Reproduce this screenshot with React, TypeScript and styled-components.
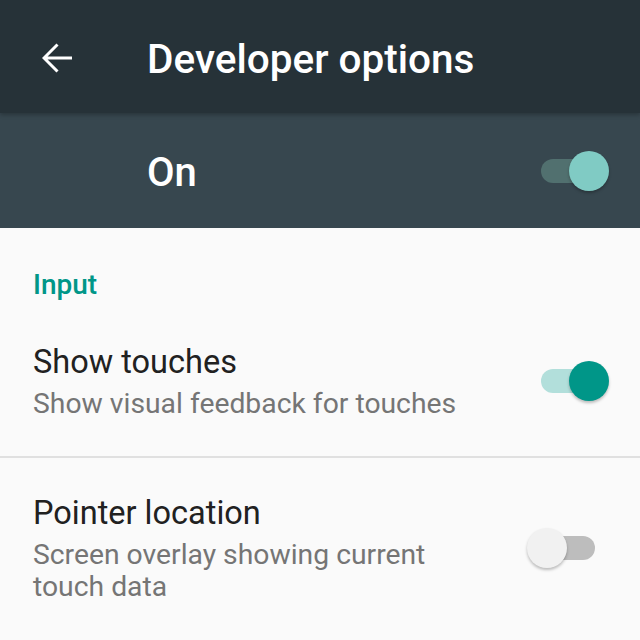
import React from 'react';
import styled, { createGlobalStyle } from 'styled-components';

const GlobalStyle = createGlobalStyle`
  html, body {
    margin: 0;
    padding: 0;
    background: #fafafa;
    font-family: Roboto, 'Noto Sans', sans-serif;
  }
`;

const Screen = styled.div`
  width: 640px;
  height: 640px;
  overflow: hidden;
  background: #fafafa;
`;

const AppBar = styled.div`
  position: relative;
  z-index: 2;
  height: 113px;
  box-sizing: border-box;
  background: #263238;
  display: flex;
  align-items: flex-start;
  padding-top: 35px;
  box-shadow: 0 2px 4px rgba(0, 0, 0, 0.25);
`;

const BackButton = styled.div`
  width: 147px;
  padding-left: 42px;
  padding-top: 8px;
  box-sizing: border-box;
  display: flex;
`;

const Title = styled.div`
  color: #fff;
  font-size: 40.5px;
  font-weight: 500;
  line-height: 48px;
`;

const MasterBar = styled.div`
  height: 115px;
  box-sizing: border-box;
  background: #37474f;
  display: flex;
  align-items: center;
  justify-content: space-between;
  padding: 0 31px 0 147px;
`;

const MasterLabel = styled.div`
  color: #fff;
  font-size: 40px;
  font-weight: 500;
  line-height: 48px;
  margin-top: 5px;
`;

const Category = styled.div`
  color: #009688;
  font-size: 28px;
  font-weight: 500;
  line-height: 34px;
  padding: 40px 33px 0;
`;

const Row = styled.div<{ $top: number; $bottom: number }>`
  display: flex;
  align-items: center;
  padding: ${(p) => p.$top}px 31px ${(p) => p.$bottom}px 33px;
`;

const RowText = styled.div`
  flex: 1;
  max-width: 454px;
  margin-right: 40px;
`;

const Primary = styled.div`
  color: #212121;
  font-size: 32.5px;
  line-height: 42px;
`;

const Secondary = styled.div`
  color: #757575;
  font-size: 28.3px;
  line-height: 32px;
  margin-top: 5px;
`;

const Divider = styled.div`
  height: 2px;
  background: #e0e0e0;
`;

const SwitchBox = styled.div`
  position: relative;
  width: 82px;
  height: 42px;
  flex-shrink: 0;
`;

const Track = styled.div<{ $color: string }>`
  position: absolute;
  left: 14px;
  right: 14px;
  top: 9px;
  height: 24px;
  border-radius: 12px;
  background: ${(p) => p.$color};
`;

const Thumb = styled.div<{ $on: boolean; $color: string }>`
  position: absolute;
  top: 1px;
  left: ${(p) => (p.$on ? '42px' : '0')};
  width: 40px;
  height: 40px;
  border-radius: 50%;
  background: ${(p) => p.$color};
  box-shadow: 0 2px 3px rgba(0, 0, 0, 0.25);
`;

type SwitchProps = { on: boolean; track: string; thumb: string };

function Switch({ on, track, thumb }: SwitchProps) {
  return (
    <SwitchBox>
      <Track $color={track} />
      <Thumb $on={on} $color={thumb} />
    </SwitchBox>
  );
}

function BackArrow() {
  return (
    <svg width="31" height="30" viewBox="0 0 31 30" fill="none">
      <path d="M2 15H30M15.5 1.5L2 15l13.5 13.5" stroke="#fff" strokeWidth="3" />
    </svg>
  );
}

export default function App() {
  return (
    <Screen>
      <GlobalStyle />
      <AppBar>
        <BackButton>
          <BackArrow />
        </BackButton>
        <Title>Developer options</Title>
      </AppBar>
      <MasterBar>
        <MasterLabel>On</MasterLabel>
        <Switch on track="#51706f" thumb="#80cbc4" />
      </MasterBar>
      <Category>Input</Category>
      <Row $top={39} $bottom={36}>
        <RowText>
          <Primary>Show touches</Primary>
          <Secondary>Show visual feedback for touches</Secondary>
        </RowText>
        <Switch on track="#b2dfdb" thumb="#009688" />
      </Row>
      <Divider />
      <Row $top={34} $bottom={30}>
        <RowText>
          <Primary>Pointer location</Primary>
          <Secondary>Screen overlay showing current touch data</Secondary>
        </RowText>
        <Switch on={false} track="#bdbdbd" thumb="#f1f1f1" />
      </Row>
    </Screen>
  );
}
